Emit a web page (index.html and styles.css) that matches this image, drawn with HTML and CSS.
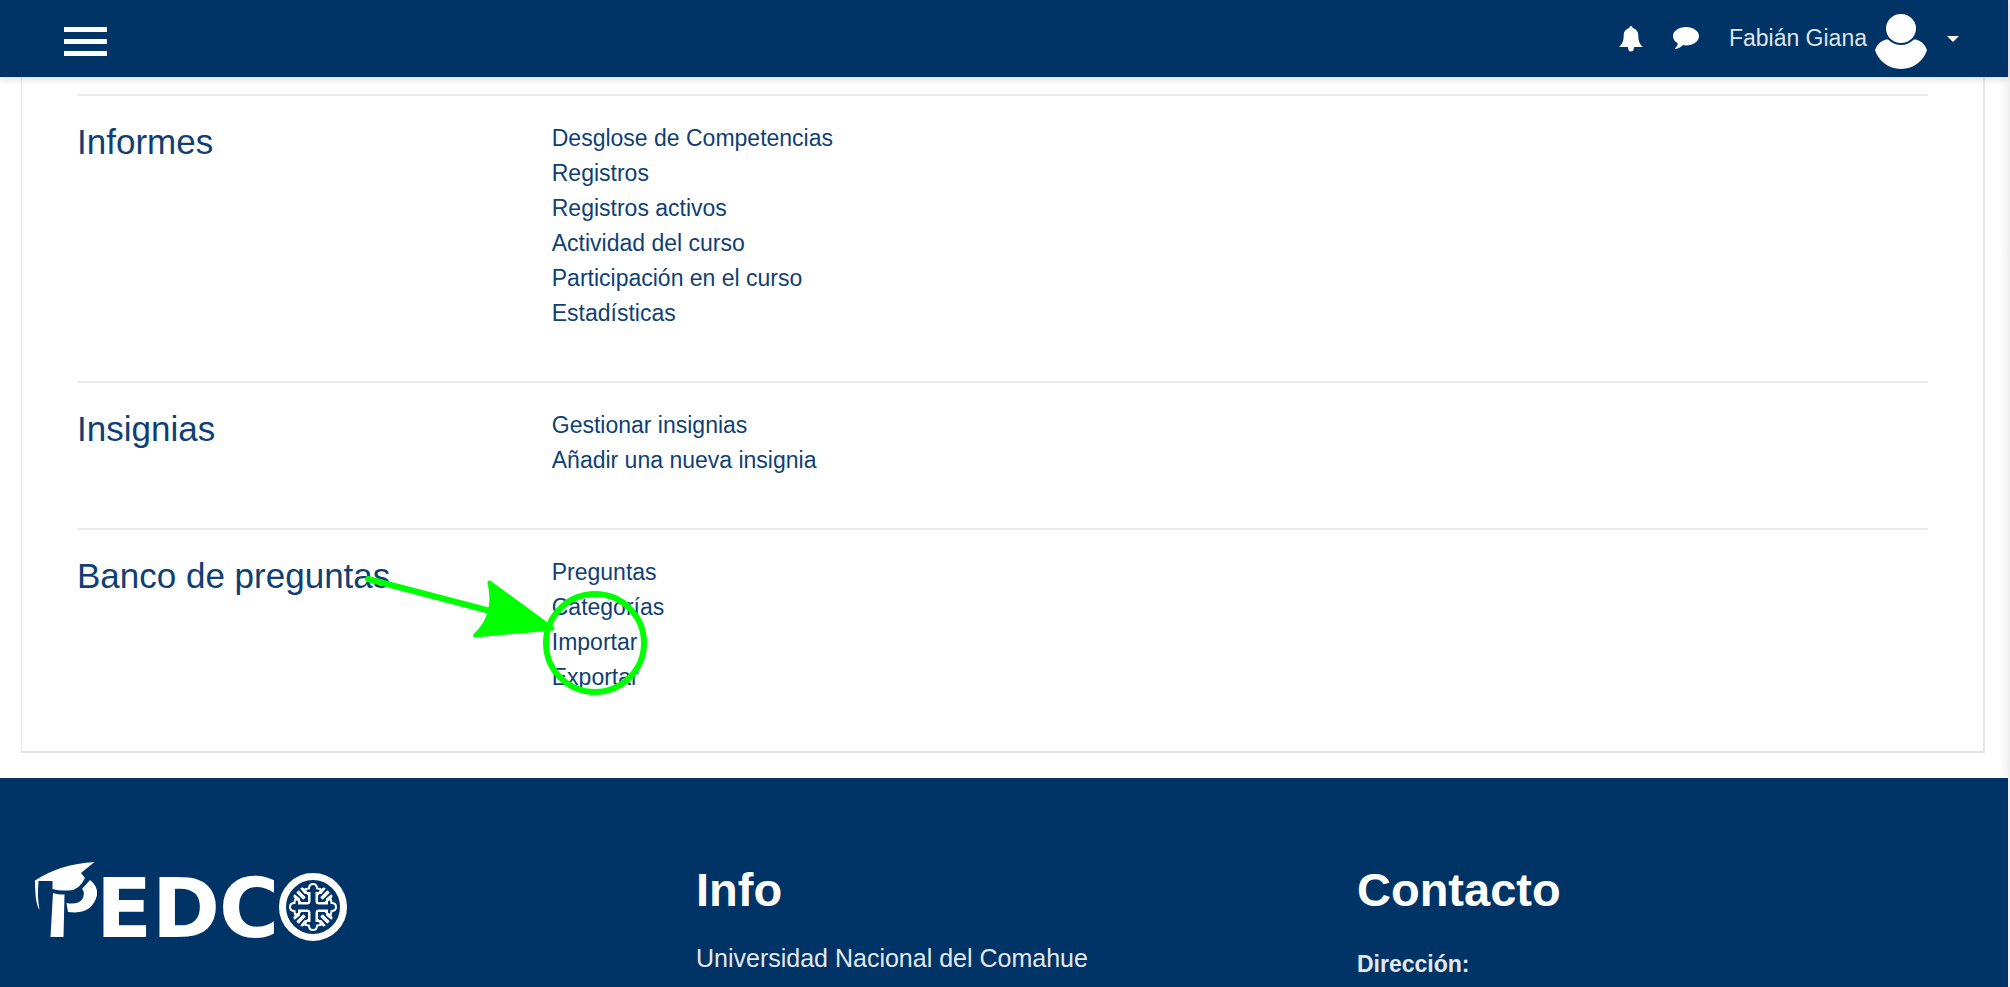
FILE: index.html
```html
<!DOCTYPE html>
<html lang="es">
<head>
<meta charset="utf-8">
<meta name="viewport" content="width=device-width, initial-scale=1">
<title>PEDCO</title>
<link rel="stylesheet" href="styles.css">
</head>
<body>
<div class="page">
  <header class="topbar">
    <button class="menu-button" type="button" aria-label="Menú"><span></span><span></span><span></span></button>
    <nav class="user-nav" aria-label="Usuario">
      <button class="icon-button" type="button" aria-label="Notificaciones">
        <svg class="bell" viewBox="0 0 24 26"><path d="M12 0C13.100 0 13.700 .8 13.600 2C17.800 3 19.300 6.200 19.300 9.500C19.300 15.500 21 18.500 24 21H15.200C15 24 13.800 25.500 12 25.500S9 24 8.800 21H0C3 18.500 4.700 15.500 4.700 9.500C4.700 6.200 6.200 3 10.400 2C10.300 .8 10.900 0 12 0Z"/></svg>
      </button>
      <button class="icon-button" type="button" aria-label="Mensajes">
        <svg class="bubble" viewBox="0 0 26 23"><path d="M13 0C20.200 0 26 4.100 26 9.200S20.200 18.400 13 18.400C12 18.400 11 18.300 10.100 18.100C7.600 20.500 5.200 21.700 2.500 22C2 21.800 2 21.200 2.400 20.900C3.900 19.300 4.500 18.300 4.800 16.300C1.800 14.600 0 12.100 0 9.200C0 4.100 5.800 0 13 0Z"/></svg>
      </button>
      <button class="user-button" type="button">
        <span>Fabián Giana</span>
        <svg class="avatar" viewBox="0 0 52 56"><path d="M11 25.500H41Q49 27.500 52 36C49 46 39 55 26 55S3 46 0 36Q3 27.500 11 25.500Z"/><ellipse class="avatar-head" cx="26" cy="14.500" rx="16" ry="15.500"/></svg>
        <svg class="caret" viewBox="0 0 12 6"><path d="M0 0H12L6 6Z"/></svg>
      </button>
    </nav>
  </header>

  <main class="card">
    <section class="group">
      <h2>Informes</h2>
      <ul>
        <li><a href="#">Desglose de Competencias</a></li>
        <li><a href="#">Registros</a></li>
        <li><a href="#">Registros activos</a></li>
        <li><a href="#">Actividad del curso</a></li>
        <li><a href="#">Participación en el curso</a></li>
        <li><a href="#">Estadísticas</a></li>
      </ul>
    </section>
    <section class="group">
      <h2>Insignias</h2>
      <ul>
        <li><a href="#">Gestionar insignias</a></li>
        <li><a href="#">Añadir una nueva insignia</a></li>
      </ul>
    </section>
    <section class="group">
      <h2>Banco de preguntas</h2>
      <ul>
        <li><a href="#">Preguntas</a></li>
        <li><a href="#">Categorías</a></li>
        <li class="marked"><a href="#">Importar</a>
          <svg class="marker" viewBox="0 0 290 160" aria-hidden="true">
            <circle cx="235" cy="83" r="49"/>
            <path d="M8 19L130 51"/>
            <path class="head" d="M129.500 22.500L192.500 68.500L115 75.500Q137 55 129.500 22.500Z"/>
          </svg>
        </li>
        <li><a href="#">Exportar</a></li>
      </ul>
    </section>
  </main>

  <footer class="footer">
    <div class="brand">
      <svg class="logo" viewBox="0 0 314 110" role="img" aria-label="PEDCO">
        <path d="M0 18.500Q25 2 59.500 0L46 11L50 16Q44 29 33 28.500Q24 29 17.500 27V19L3.500 19Q2 35 4.500 48Q0 42 0 18.500Z"/>
        <path d="M18 31Q24 33 29.500 32.500L28.500 75H15.500Z"/>
        <path d="M55 18Q63 24 62 33Q58 50 40 50.500L33 50L31.500 41Q43 43 47.500 37Q50.500 30 47 27Z"/>
        <text y="75"><tspan x="61">E</tspan><tspan x="117">D</tspan><tspan x="184">C</tspan></text>
        <circle class="ring" cx="278" cy="45" r="30.500"/>
        <g class="emblem">
          <path id="arm" d="M274.500 40.500V31H270.500V27L274 26.500Q274 22 278 22T282 26.500L285.500 27V31H281.500V40.500M274.500 41H266L259 34M281.500 41H290L297 34M270 36L263 29M270 31L266 26M286 36L293 29M286 31L290 26"/>
          <use href="#arm" transform="rotate(90 278 45)"/>
          <use href="#arm" transform="rotate(180 278 45)"/>
          <use href="#arm" transform="rotate(270 278 45)"/>
        </g>
      </svg>
    </div>
    <div>
      <h2>Info</h2>
      <p class="institution">Universidad Nacional del Comahue</p>
    </div>
    <div>
      <h2>Contacto</h2>
      <p class="address"><strong>Dirección:</strong></p>
    </div>
  </footer>
</div>
</body>
</html>
```

FILE: styles.css
```css
* { box-sizing: border-box; }

body {
  margin: 0;
  background: #f0f0f0;
  font-family: "Liberation Sans", Arial, sans-serif;
  font-size: 23px;
  line-height: 35px;
  color: #0f3f74;
}

h2, ul, p { margin: 0; padding: 0; }
ul { list-style: none; }
a { color: inherit; text-decoration: none; }
button {
  border: 0;
  padding: 0;
  background: none;
  color: inherit;
  font: inherit;
  cursor: pointer;
}
svg { display: block; fill: currentColor; }

.page {
  display: flex;
  flex-direction: column;
  min-height: 100vh;
  margin-right: 2px;
  background: linear-gradient(to left, #f4f4f4, #fff 9px);
}

.topbar {
  position: relative;
  z-index: 1;
  display: flex;
  align-items: center;
  justify-content: space-between;
  height: 77px;
  padding: 0 49px 0 64px;
  background: #003366;
  color: #fff;
  box-shadow: 0 2px 8px rgba(0, 0, 0, 0.14);
}

.menu-button {
  display: grid;
  gap: 7px;
  width: 43px;
  padding-top: 5px;
}
.menu-button span { height: 5px; background: #fff; }

.user-nav { display: flex; align-items: center; }
.icon-button { margin-right: 30px; }
.bell { width: 24px; height: 26px; }
.bubble { width: 26px; height: 23px; }
.user-button { display: flex; align-items: center; color: #dfe5ec; }
.avatar { width: 52px; height: 56px; margin: 6px 20px 0 8px; color: #fff; }
.avatar-head { stroke: #003366; stroke-width: 2; }
.caret { width: 12px; height: 6px; color: #fff; }

.card {
  margin: 0 23px 25px 21px;
  padding: 17px 55px 6px;
  border: solid #e5e5e5;
  border-width: 0 2px 2px 1px;
  background: #fff;
}

.group {
  display: grid;
  grid-template-columns: 1fr 3fr;
  gap: 16px;
  padding: 25px 0 50px;
  border-top: 2px solid #ebebeb;
}
.group h2 { font-size: 35px; font-weight: 400; line-height: 42px; }

.marked { position: relative; }
.marker {
  position: absolute;
  left: -192px;
  top: -65px;
  width: 290px;
  height: 160px;
  fill: none;
  stroke: #00ff00;
  stroke-width: 6;
  stroke-linecap: round;
  stroke-linejoin: round;
  pointer-events: none;
}
.marker .head { fill: #00ff00; stroke-width: 4; }

.footer {
  display: grid;
  grid-template-columns: repeat(3, 1fr);
  gap: 45px;
  flex: 1;
  padding: 84px 35px 0;
  background: #003366;
  color: #e3e8ed;
}
.footer h2 { color: #fff; font-size: 47px; line-height: 56px; }
.institution { margin-top: 23px; font-size: 25px; }
.address { margin-top: 29px; }

.logo { width: 314px; height: 110px; color: #fff; }
.logo text { font: bold 82px "DejaVu Sans", sans-serif; }
.ring { fill: none; stroke: #fff; stroke-width: 7; }
.emblem { fill: none; stroke: #fff; stroke-width: 2; }
```
